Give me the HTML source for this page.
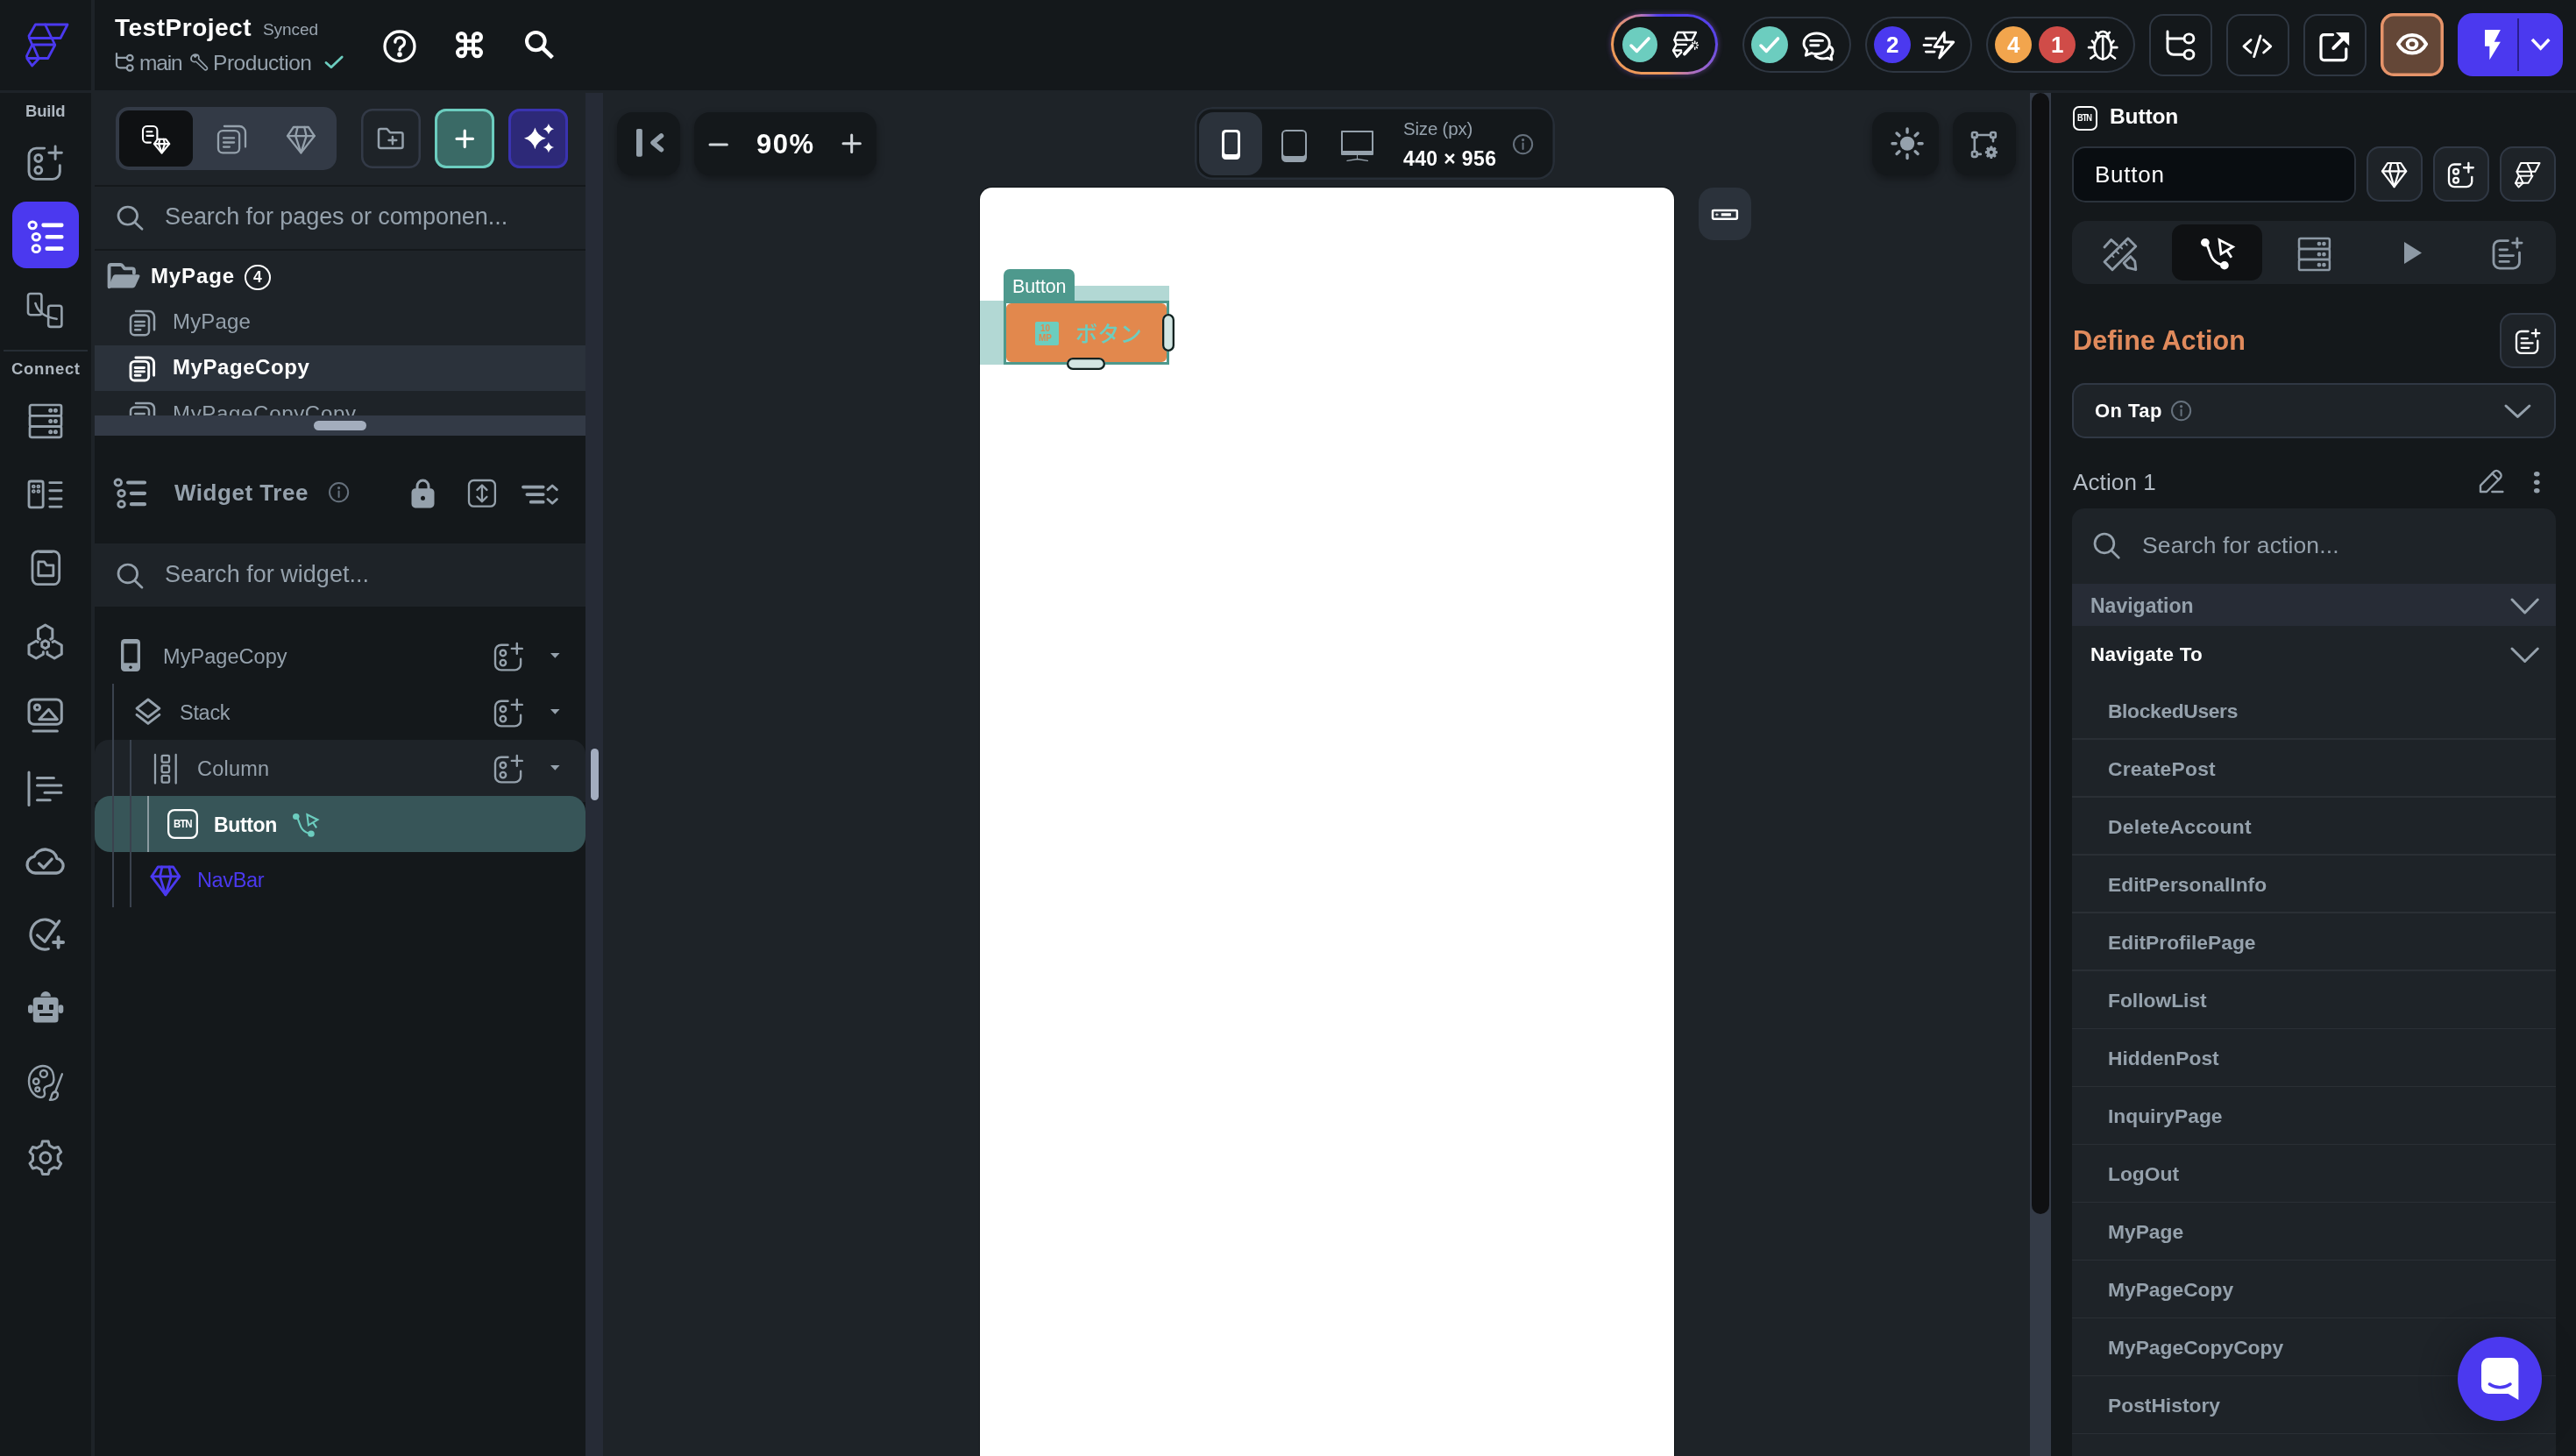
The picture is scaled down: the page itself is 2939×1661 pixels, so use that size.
<!DOCTYPE html>
<html lang="en"><head><meta charset="utf-8"><title>FlutterFlow - TestProject</title>
<style>
html,body{margin:0;padding:0;background:#1e2328;}
body{width:2939px;height:1661px;position:relative;overflow:hidden;font-family:"Liberation Sans","Noto Sans CJK JP",sans-serif;}
.b,.t,.i{position:absolute;}
.t{white-space:nowrap;line-height:1;will-change:transform;}
.i{overflow:visible;}
.f *{vector-effect:non-scaling-stroke;}
</style></head>
<body>
<div class="b" style="left:0.0px;top:0.0px;width:2939.0px;height:1661.0px;background:#1e2328;"></div>
<div class="b" style="left:0.0px;top:0.0px;width:2939.0px;height:102.5px;background:#14181b;"></div>
<div class="b" style="left:0.0px;top:106.0px;width:104.0px;height:1555.0px;background:#14181b;"></div>
<div class="b" style="left:104.0px;top:0.0px;width:4.0px;height:103.0px;background:#1e2328;"></div>
<div class="b" style="left:108.0px;top:106.0px;width:560.0px;height:391.0px;background:#1e2328;"></div>
<div class="b" style="left:108.0px;top:497.0px;width:560.0px;height:1164.0px;background:#14181b;"></div>
<div class="b" style="left:668.0px;top:106.0px;width:20.0px;height:1555.0px;background:#262b36;"></div>
<div class="b" style="left:2316.0px;top:106.0px;width:24.0px;height:1555.0px;background:#343b47;"></div>
<div class="b" style="left:2318.1px;top:106.0px;width:19.7px;height:1279.0px;background:#0f1012;border-radius:10px;"></div>
<div class="b" style="left:2340.0px;top:106.0px;width:599.0px;height:1555.0px;background:#14181b;"></div>
<svg class="i" style="left:26px;top:22px" width="56" height="58" viewBox="26 22 56 58" fill="none" stroke="#4b39ef" stroke-width="2.8" stroke-linejoin="round" stroke-linecap="round"><path d="M40.400 28H77L69 43.500H33.500L33 41z"/><path d="M51.500 28l7.500 15.500"/><path d="M33.500 43.500l3.200 7.500h26l-3.700-7.500"/><path d="M62.700 51.500L54.700 66.500H31l-.6-2.500 6.300-13"/><path d="M37.900 52l6.200 14.500"/><path d="M31 67l5.600 8 7.500-8"/></svg>
<div class="t " style="left:131.0px;top:17.9px;font-size:28px;color:#ffffff;font-weight:700;letter-spacing:0.51px;">TestProject</div>
<div class="t " style="left:300.0px;top:23.9px;font-size:19px;color:#9aa5b0;letter-spacing:-0.07px;">Synced</div>
<svg class="i f" style="left:132.8px;top:61.3px;color:#95a1ac;" width="18.6" height="19.6" viewBox="3.5 2 17.7 19.7" preserveAspectRatio="none" fill="none" stroke="currentColor" stroke-width="2.2" stroke-linecap="round" stroke-linejoin="round"><path d="M3.500 2v12.500a4 4 0 0 0 4 4h7"/><path d="M3.500 7h11"/><circle cx="18" cy="7" r="3.200"/><circle cx="18" cy="18.500" r="3.200"/></svg>
<div class="t " style="left:158.5px;top:59.6px;font-size:24.5px;color:#95a1ac;letter-spacing:-1.20px;">main</div>
<svg class="i f" style="left:218.4px;top:61.9px;color:#95a1ac;" width="18.5" height="17.8" viewBox="1.93544 2.57277 20.1859 19.8485" preserveAspectRatio="none" fill="none" stroke="currentColor" stroke-width="2" stroke-linecap="round" stroke-linejoin="round"><path d="M9 2.800a5.500 5.500 0 0 0-6.500 7.700c1.200 1.500 3.500 2 5.500 1.300l10.500 10a2 2 0 0 0 3-3L11.300 8.300c.7-2 .2-4-1.300-5.200L7 6 5.500 4.500z" stroke-width="1.63"/></svg>
<div class="t " style="left:243.0px;top:59.6px;font-size:24.5px;color:#95a1ac;letter-spacing:-0.46px;">Production</div>
<svg class="i f" style="left:372.4px;top:65.4px;color:#6ccdbf;" width="18.2" height="11.7" viewBox="4 6 17 12.5" preserveAspectRatio="none" fill="none" stroke="currentColor" stroke-width="2.8" stroke-linecap="round" stroke-linejoin="round"><path d="M4 13 L9.5 18.5 L21 6"/></svg>
<svg class="i f" style="left:438.6px;top:35.5px;color:#ffffff;" width="34.0" height="33.9" viewBox="1.5 1.5 21 21" preserveAspectRatio="none" fill="none" stroke="currentColor" stroke-width="3.3" stroke-linecap="round" stroke-linejoin="round"><circle cx="12" cy="12" r="10.500"/><path d="M8.800 9a3.300 3.300 0 1 1 4.800 3c-1 .6-1.600 1.200-1.600 2.500"/><circle cx="12" cy="17.700" r=".7" fill="currentColor"/></svg>
<svg class="i f" style="left:522.2px;top:38.2px;color:#ffffff;" width="27.0" height="26.3" viewBox="3 3 18 18" preserveAspectRatio="none" fill="none" stroke="currentColor" stroke-width="4" stroke-linecap="round" stroke-linejoin="round"><path d="M15 6v12a3 3 0 1 0 3-3H6a3 3 0 1 0 3 3V6a3 3 0 1 0-3 3h12a3 3 0 1 0-3-3"/></svg>
<svg class="i f" style="left:601.0px;top:37.0px;color:#ffffff;" width="29.3" height="28.6" viewBox="1.9 1.8 26.7 26.6" preserveAspectRatio="none" fill="none" stroke="currentColor" stroke-width="0" stroke-linecap="round" stroke-linejoin="round"><circle cx="11.300" cy="11.200" r="9.400" stroke-width="4.02"/><path d="M18.300 18.300L28.600 28.400" stroke-width="4.67" stroke-linecap="butt"/></svg>
<div class="b" style="left:1837.500px;top:16px;width:122.500px;height:69px;border-radius:35px;background:conic-gradient(from 0deg,#4b39ef 0deg,#5a45e8 85deg,#a86cc8 130deg,#ee9a5a 175deg,#ee9a5a 285deg,#c07ab0 318deg,#5a45e8 345deg,#4b39ef 360deg);box-shadow:0 0 6px rgba(150,100,220,.45)"></div>
<div class="b" style="left:1840.5px;top:19.0px;width:116.5px;height:63.0px;background:#14181b;border-radius:32px;"></div>
<div class="b" style="left:1850.5px;top:30.8px;width:40.5px;height:40.5px;background:#6ccdbf;border-radius:21px;"></div>
<svg class="i f" style="left:1861.2px;top:44.2px;color:#ffffff;" width="20.0" height="14.4" viewBox="4 6 17 12.5" preserveAspectRatio="none" fill="none" stroke="currentColor" stroke-width="3.6" stroke-linecap="round" stroke-linejoin="round"><path d="M4 13 L9.5 18.5 L21 6"/></svg>
<svg class="i f" style="left:1908.9px;top:36.5px;color:#ffffff;" width="28.4" height="27.8" viewBox="0.5 2.5 23 21" preserveAspectRatio="none" fill="none" stroke="currentColor" stroke-width="2.4" stroke-linecap="round" stroke-linejoin="round"><path d="M4.500 2.500h17l-3.500 6.500H1.500z"/><path d="M10 2.500l3.500 6.500"/><path d="M2 9.500l1.500 3.500h9"/><path d="M3.500 13l-3 5 3.500 5.500 4-4"/><path d="M0.800 18h7"/><path d="M11 21l7-7" stroke-width="3.84"/><path d="M20.500 10v2M20.500 15.500v1.500M17 13.500h1.500M22.500 13.500h1M18.300 11.300l.8.800M22.700 11.300l-.8.800M22.700 15.800l-.8-.8" stroke-width="1.54"/></svg>
<div class="b" style="left:1988.0px;top:19.3px;width:123.5px;height:63.4px;border-radius:32px;box-shadow:inset 0 0 0 2px #2f3742;box-sizing:border-box;"></div>
<div class="b" style="left:1998.0px;top:30.0px;width:42.0px;height:42.0px;background:#6ccdbf;border-radius:21px;"></div>
<svg class="i f" style="left:2009.4px;top:44.2px;color:#ffffff;" width="19.5" height="14.4" viewBox="4 6 17 12.5" preserveAspectRatio="none" fill="none" stroke="currentColor" stroke-width="3.6" stroke-linecap="round" stroke-linejoin="round"><path d="M4 13 L9.5 18.5 L21 6"/></svg>
<svg class="i f" style="left:2058.4px;top:37.5px;color:#ffffff;" width="33.1" height="30.1" viewBox="1.5 2.5 21.5 19.7" preserveAspectRatio="none" fill="none" stroke="currentColor" stroke-width="2.9" stroke-linecap="round" stroke-linejoin="round"><path d="M11 2.500c5.500 0 9.500 3.300 9.500 7.700s-4 7.700-9.500 7.700c-1.300 0-2.600-.2-3.800-.6L3 19l1-3.800C2.700 13.800 1.500 12 1.500 10.200 1.500 5.800 5.500 2.500 11 2.500z"/><path d="M6.500 8h9M6.500 11.500h6"/><path d="M21 12.500c1.500 1 2 2.300 2 3.500 0 1.200-.5 2.300-1.300 3.200l.5 3-3-1.300c-1 .3-2 .5-3.200.5-2.500 0-4.500-.8-6-2"/></svg>
<div class="b" style="left:2128.0px;top:19.3px;width:122.0px;height:63.4px;border-radius:32px;box-shadow:inset 0 0 0 2px #2f3742;box-sizing:border-box;"></div>
<div class="b" style="left:2138.0px;top:30.0px;width:42.0px;height:42.0px;background:#4b39ef;border-radius:21px;"></div>
<div class="t " style="left:2151.7px;top:38.2px;font-size:26px;color:#ffffff;font-weight:700;">2</div>
<svg class="i f" style="left:2195.2px;top:36.8px;color:#ffffff;" width="33.8" height="29.0" viewBox="1 1.5 21 21" preserveAspectRatio="none" fill="none" stroke="currentColor" stroke-width="2.9" stroke-linecap="round" stroke-linejoin="round"><path d="M15.500 1.500l-7 12h6l-2.500 9 10-13h-6.500z"/><path d="M2.500 6.500h7M1 12h5M2.500 17.500h6"/></svg>
<div class="b" style="left:2266.0px;top:19.3px;width:169.5px;height:63.4px;border-radius:32px;box-shadow:inset 0 0 0 2px #2f3742;box-sizing:border-box;"></div>
<div class="b" style="left:2276.0px;top:30.0px;width:42.0px;height:42.0px;background:#f2a54d;border-radius:21px;"></div>
<div class="t " style="left:2289.7px;top:38.2px;font-size:26px;color:#ffffff;font-weight:700;">4</div>
<div class="b" style="left:2326.0px;top:30.0px;width:42.0px;height:42.0px;background:#d04c48;border-radius:21px;"></div>
<div class="t " style="left:2339.5px;top:38.2px;font-size:26px;color:#ffffff;font-weight:700;">1</div>
<svg class="i f" style="left:2382.8px;top:36.3px;color:#ffffff;" width="32.4" height="31.4" viewBox="1.5 3 21 19" preserveAspectRatio="none" fill="none" stroke="currentColor" stroke-width="2.6" stroke-linecap="round" stroke-linejoin="round"><path d="M8 7a4 4 0 0 1 8 0"/><ellipse cx="12" cy="14" rx="6.300" ry="8"/><path d="M12 7v15"/><path d="M1.500 14h4M18.500 14h4M3 21.500l3.500-2.500M21 21.500l-3.500-2.500M7 3.500l2 2M17 3.500l-2 2M5.800 11.500L4 9.500M18.200 11.500l1.800-2"/></svg>
<div class="b" style="left:2452.4px;top:15.5px;width:71.4px;height:71.0px;border-radius:16px;box-shadow:inset 0 0 0 2px #2f3742;box-sizing:border-box;"></div>
<svg class="i f" style="left:2473.1px;top:36.2px;color:#ffffff;" width="29.9" height="31.3" viewBox="3.5 2 17.7 19.7" preserveAspectRatio="none" fill="none" stroke="currentColor" stroke-width="2.9" stroke-linecap="round" stroke-linejoin="round"><path d="M3.500 2v12.500a4 4 0 0 0 4 4h7"/><path d="M3.500 7h11"/><circle cx="18" cy="7" r="3.200"/><circle cx="18" cy="18.500" r="3.200"/></svg>
<div class="b" style="left:2540.0px;top:15.5px;width:71.5px;height:71.0px;border-radius:16px;box-shadow:inset 0 0 0 2px #2f3742;box-sizing:border-box;"></div>
<svg class="i f" style="left:2560.2px;top:40.5px;color:#ffffff;" width="30.7" height="23.6" viewBox="1.5 3 21 18" preserveAspectRatio="none" fill="none" stroke="currentColor" stroke-width="2.9" stroke-linecap="round" stroke-linejoin="round"><path d="M7 6.500L1.500 12 7 17.500M17 6.500l5.500 5.500-5.500 5.500M14.500 3l-5 18"/></svg>
<div class="b" style="left:2628.0px;top:15.5px;width:71.6px;height:71.0px;border-radius:16px;box-shadow:inset 0 0 0 2px #2f3742;box-sizing:border-box;"></div>
<svg class="i f" style="left:2647.6px;top:36.6px;color:#ffffff;" width="32.2" height="31.6" viewBox="3 2 19 18.5" preserveAspectRatio="none" fill="none" stroke="currentColor" stroke-width="3.2" stroke-linecap="round" stroke-linejoin="round"><path d="M11 3.500H5a2 2 0 0 0-2 2v13a2 2 0 0 0 2 2h13a2 2 0 0 0 2-2V13"/><path d="M11.500 12.500l8-8" stroke-width="4.08"/><path d="M13 2h9v9z" fill="currentColor" stroke="none"/></svg>
<div class="b" style="left:2715.8px;top:14.7px;width:72.3px;height:72.4px;background:#644737;border-radius:15px;box-shadow:inset 0 0 0 3.5px #e6946a;"></div>
<svg class="i f" style="left:2735.9px;top:39.7px;color:#ffffff;" width="32.1" height="20.6" viewBox="1.5 4.5 21 15" preserveAspectRatio="none" fill="none" stroke="currentColor" stroke-width="4" stroke-linecap="round" stroke-linejoin="round"><path d="M1.500 12C4 7 7.500 4.500 12 4.500S20 7 22.500 12C20 17 16.500 19.500 12 19.500S4 17 1.500 12z"/><circle cx="12" cy="12" r="3.500"/></svg>
<div class="b" style="left:2803.9px;top:14.7px;width:120.4px;height:72.4px;background:#4b39ef;border-radius:17px;"></div>
<div class="b" style="left:2871.8px;top:21.0px;width:2.2px;height:59.9px;background:#2a1f8f;"></div>
<svg class="i f" style="left:2835.0px;top:33.9px;color:#ffffff;" width="17.9" height="34.2" viewBox="7 2 10 20" preserveAspectRatio="none" fill="none" stroke="currentColor" stroke-width="0" stroke-linecap="round" stroke-linejoin="round"><path d="M7 2v11h3v9l7-12h-4l4-8z" fill="currentColor" stroke="none"/></svg>
<svg class="i f" style="left:2889.3px;top:45.4px;color:#ffffff;" width="19.3" height="10.3" viewBox="5 8.5 14 7" preserveAspectRatio="none" fill="none" stroke="currentColor" stroke-width="3.5" stroke-linecap="round" stroke-linejoin="round"><path d="M5 8.500l7 7 7-7" stroke-linecap="butt" stroke-linejoin="miter"/></svg>
<div class="t " style="left:29.0px;top:118.3px;font-size:18.5px;color:#aeb7c0;font-weight:700;letter-spacing:-0.19px;">Build</div>
<svg class="i f" style="left:33.1px;top:167.4px;color:#95a1ac;" width="37.4" height="37.4" viewBox="3.5 2.5 18 18" preserveAspectRatio="none" fill="none" stroke="currentColor" stroke-width="2.9" stroke-linecap="round" stroke-linejoin="round"><path d="M12 3.5H7.5a4 4 0 0 0-4 4v9a4 4 0 0 0 4 4h9a4 4 0 0 0 4-4V13"/><circle cx="8.7" cy="9" r="1.9"/><circle cx="8.7" cy="15.6" r="1.9"/><path d="M18 2.5v7M14.5 6h7"/></svg>
<div class="b" style="left:14.0px;top:230.0px;width:76.0px;height:76.0px;background:#4b39ef;border-radius:16px;"></div>
<svg class="i f" style="left:33.2px;top:252.5px;color:#ffffff;" width="37.3" height="34.5" viewBox="2.5 3 18 18" preserveAspectRatio="none" fill="none" stroke="currentColor" stroke-width="3" stroke-linecap="round" stroke-linejoin="round"><circle cx="4.500" cy="5" r="2"/><circle cx="6.500" cy="12" r="2"/><circle cx="6.500" cy="19" r="2"/><path d="M10.500 5h10M12.500 12h8M12.500 19h8" stroke-width="4.59"/></svg>
<svg class="i f" style="left:32.3px;top:335.3px;color:#95a1ac;" width="38.4" height="37.9" viewBox="1.3 1.3 21.4 21.3" preserveAspectRatio="none" fill="none" stroke="currentColor" stroke-width="2.6" stroke-linecap="round" stroke-linejoin="round"><rect x="1.300" y="1.300" width="8.600" height="13.600" rx="1.500"/><rect x="14.200" y="9" width="8.500" height="13.600" rx="1.500"/><path d="M6 7.500C7.500 13 12 16.500 19.500 17.500"/></svg>
<div class="b" style="left:4.0px;top:398.6px;width:96.0px;height:2.0px;background:#262d34;"></div>
<div class="t " style="left:13.0px;top:411.9px;font-size:18.5px;color:#aeb7c0;font-weight:700;letter-spacing:0.67px;">Connect</div>
<svg class="i f" style="left:34.0px;top:461.6px;color:#95a1ac;" width="36.0" height="36.8" viewBox="2.5 2.5 19 18.9" preserveAspectRatio="none" fill="none" stroke="currentColor" stroke-width="2.7" stroke-linecap="round" stroke-linejoin="round"><rect x="2.5" y="2.5" width="19" height="6.3" rx="1"/><rect x="2.5" y="8.8" width="19" height="6.3" rx="1"/><rect x="2.5" y="15.1" width="19" height="6.3" rx="1"/><circle cx="15" cy="5.7" r=".6"/><circle cx="18" cy="5.7" r=".6"/><circle cx="15" cy="12" r=".6"/><circle cx="18" cy="12" r=".6"/><circle cx="15" cy="18.3" r=".6"/><circle cx="18" cy="18.3" r=".6"/></svg>
<svg class="i f" style="left:33.1px;top:548.7px;color:#95a1ac;" width="37.1" height="29.9" viewBox="2.5 3 19.5 17.5" preserveAspectRatio="none" fill="none" stroke="currentColor" stroke-width="2.8" stroke-linecap="round" stroke-linejoin="round"><rect x="2.5" y="3" width="8.5" height="17.5" rx="1.2"/><path d="M15 4h7M15 9.3h7M15 14.7h7M15 20h7"/><circle cx="5.3" cy="6.5" r=".5"/><circle cx="8.2" cy="6.5" r=".5"/><circle cx="5.3" cy="9.8" r=".5"/><circle cx="8.2" cy="9.8" r=".5"/></svg>
<svg class="i f" style="left:36.6px;top:628.9px;color:#95a1ac;" width="30.7" height="37.7" viewBox="3 2.5 18 19" preserveAspectRatio="none" fill="none" stroke="currentColor" stroke-width="2.8" stroke-linecap="round" stroke-linejoin="round"><rect x="3" y="2.5" width="18" height="19" rx="3.5"/><path d="M8 2.8h8"/><path d="M7 8.5h4l1.5 2H17v6H7z"/></svg>
<svg class="i f" style="left:33.2px;top:713.0px;color:#95a1ac;" width="37.3" height="38.0" viewBox="3.8 2.6 16.4 16.9" preserveAspectRatio="none" fill="none" stroke="currentColor" stroke-width="3" stroke-linecap="round" stroke-linejoin="round"><path d="M9.300 9.800L8.400 9.300V4.700L12 2.600l3.600 2.100v4.600l-.9.500"/><path d="M8.300 11.200l-.9-.5-3.600 2.100v4.600l3.600 2.100 3.600-2.100v-1.100"/><path d="M15.700 11.200l.9-.5 3.600 2.100v4.600l-3.600 2.100-3.600-2.100v-1.100"/><path d="M12 10.500l1.700 1v2l-1.700 1-1.700-1v-2z"/></svg>
<svg class="i f" style="left:33.2px;top:798.2px;color:#95a1ac;" width="37.3" height="35.9" viewBox="2.5 2.5 19 19" preserveAspectRatio="none" fill="none" stroke="currentColor" stroke-width="3" stroke-linecap="round" stroke-linejoin="round"><rect x="2.5" y="2.5" width="19" height="15" rx="3"/><circle cx="7.3" cy="7.3" r="1.6"/><path d="M8.5 14.5l5.5-6 5 6z"/><path d="M5 21.5h14"/></svg>
<svg class="i f" style="left:33.2px;top:881.0px;color:#95a1ac;" width="36.9" height="37.4" viewBox="2.5 2 17.5 20" preserveAspectRatio="none" fill="none" stroke="currentColor" stroke-width="3" stroke-linecap="round" stroke-linejoin="round"><path d="M2.5 2v20"/><path d="M7 5.5h9M7 10h13M11 14.5h9M7 19h7"/></svg>
<svg class="i f" style="left:31.3px;top:968.5px;color:#95a1ac;" width="41.1" height="27.0" viewBox="2.02126 5.94878 19.7007 13.5512" preserveAspectRatio="none" fill="none" stroke="currentColor" stroke-width="3.3" stroke-linecap="round" stroke-linejoin="round"><path d="M6.5 19.5a4.8 4.8 0 0 1-.6-9.5 6.5 6.5 0 0 1 12.4 1.2 4.2 4.2 0 0 1-.3 8.3z"/><path d="M8.5 14l2.5 2.5 4.5-5"/></svg>
<svg class="i f" style="left:35.4px;top:1049.3px;color:#95a1ac;" width="37.1" height="34.1" viewBox="0.89685 0.697562 22.8032 19.8" preserveAspectRatio="none" fill="none" stroke="currentColor" stroke-width="3.2" stroke-linecap="round" stroke-linejoin="round"><path d="M17.800 3.600A9.900 9.900 0 1 0 13.360 20.160"/><path d="M5.600 11.100l5.200 4.300L21 1.700"/><path d="M20.300 12.400v6.800M16.900 15.800h6.800" stroke-width="3.85"/></svg>
<svg class="i f" style="left:31.7px;top:1131.3px;color:#95a1ac;" width="40.3" height="35.5" viewBox="1.5 2 21 18.5" preserveAspectRatio="none" fill="none" stroke="currentColor" stroke-width="0" stroke-linecap="round" stroke-linejoin="round"><path d="M9 5a3 3 0 0 1 6 0" fill="currentColor"/><rect x="4.5" y="5.5" width="15" height="15" rx="2" fill="currentColor"/><rect x="1.5" y="10" width="3" height="5" rx="1.5" fill="currentColor"/><rect x="19.500" y="10" width="3" height="5" rx="1.5" fill="currentColor"/></svg>
<svg class="i f" style="left:32.9px;top:1216.2px;color:#95a1ac;" width="37.9" height="38.8" viewBox="2.6 2.80648 18.9 19.4935" preserveAspectRatio="none" fill="none" stroke="currentColor" stroke-width="2.4" stroke-linecap="round" stroke-linejoin="round"><path d="M13 3.2C8 1.5 2.6 5.5 2.6 11.5c0 5 3 9 6.5 9.3 2.5.2 2.8-1.8 2.3-3.3-.6-1.8.6-3 2.4-3.3 2.8-.4 3.3-3 2.8-5.8-.3-2.3-1.5-4.3-3.6-5.2z"/><circle cx="11" cy="7.3" r="2"/><circle cx="6.7" cy="11.7" r="1.6"/><circle cx="7.5" cy="16.3" r="1.2"/><path d="M21.500 7.5L17.5 18"/><path d="M17.8 17.5c1.2.5 1.5 1.5 1 2.8-.5 1.400-2.500 2-4.300 2 .8-.8.8-1.800 1.100-2.800.3-1 1.200-1.800 2.200-2z"/></svg>
<svg class="i f" style="left:34.1px;top:1301.5px;color:#95a1ac;" width="35.7" height="37.5" viewBox="2.03 1.57 19.94 20.86" preserveAspectRatio="none" fill="none" stroke="currentColor" stroke-width="3" stroke-linecap="round" stroke-linejoin="round"><circle cx="12" cy="12" r="3.3"/><path d="M9.47 4.20 L10.12 1.57 L13.88 1.57 L14.53 4.20 L17.49 5.91 L20.10 5.16 L21.97 8.41 L20.02 10.30 L20.02 13.70 L21.97 15.59 L20.10 18.84 L17.49 18.09 L14.53 19.80 L13.88 22.43 L10.12 22.43 L9.47 19.80 L6.51 18.09 L3.90 18.84 L2.03 15.59 L3.98 13.70 L3.98 10.30 L2.03 8.41 L3.90 5.16 L6.51 5.91Z"/></svg>
<div class="b" style="left:43.0px;top:1146.0px;width:5.5px;height:6.0px;background:#14181b;border-radius:1px;"></div>
<div class="b" style="left:55.5px;top:1146.0px;width:5.5px;height:6.0px;background:#14181b;border-radius:1px;"></div>
<div class="b" style="left:44.5px;top:1156.0px;width:15.0px;height:3.0px;background:#14181b;"></div>
<div class="b" style="left:132.0px;top:122.0px;width:251.7px;height:72.0px;background:#333a46;border-radius:15px;"></div>
<div class="b" style="left:136.0px;top:126.0px;width:84.0px;height:64.0px;background:#0f1113;border-radius:11px;"></div>
<svg class="i f" style="left:162.7px;top:143.9px;color:#ffffff;" width="30.2" height="30.5" viewBox="2 3 20.26 19.68" preserveAspectRatio="none" fill="none" stroke="currentColor" stroke-width="2.1" stroke-linecap="round" stroke-linejoin="round"><path d="M13 12.500V6a3 3 0 0 0-3-3H5a3 3 0 0 0-3 3v6a3 3 0 0 0 3 3h3"/><path d="M5 7h4M5 10h5"/><g transform="translate(9.500 10.500) scale(.58)"><path d="M6.500 3.500h11l4.500 6-10 11.500L2 9.500z"/><path d="M2 9.500h20"/><path d="M9.500 3.500L8 9.500l4 11.500 4-11.500-1.500-6"/></g></svg>
<svg class="i f" style="left:249.2px;top:144.0px;color:#95a1ac;" width="31.0" height="30.3" viewBox="3 3.5 18 18" preserveAspectRatio="none" fill="none" stroke="currentColor" stroke-width="2.3" stroke-linecap="round" stroke-linejoin="round"><rect x="3" y="6.500" width="14" height="15" rx="3"/><path d="M7 3.500h10a4 4 0 0 1 4 4v10"/><path d="M6.500 11.500h7M6.500 14.500h7M6.500 17.500h4"/></svg>
<svg class="i f" style="left:328.0px;top:144.8px;color:#95a1ac;" width="30.8" height="29.4" viewBox="2 3.5 20 17.5" preserveAspectRatio="none" fill="none" stroke="currentColor" stroke-width="2.3" stroke-linecap="round" stroke-linejoin="round"><path d="M6.500 3.500h11l4.500 6-10 11.500L2 9.500z"/><path d="M2 9.500h20"/><path d="M9.500 3.500L8 9.500l4 11.500 4-11.500-1.500-6"/></svg>
<div class="b" style="left:412.0px;top:124.0px;width:68.0px;height:68.0px;background:#1e2328;border-radius:13px;box-shadow:inset 0 0 0 2.5px #333a47;box-sizing:border-box;"></div>
<svg class="i f" style="left:432.1px;top:146.9px;color:#95a1ac;" width="27.5" height="22.0" viewBox="2.5 4 19 16" preserveAspectRatio="none" fill="none" stroke="currentColor" stroke-width="2.5" stroke-linecap="round" stroke-linejoin="round"><path d="M2.500 5.500a1.500 1.500 0 0 1 1.500-1.500h5l2.500 3H20a1.500 1.500 0 0 1 1.500 1.500v10a1.500 1.500 0 0 1-1.500 1.500H4a1.500 1.500 0 0 1-1.500-1.500z"/><path d="M13.500 10.500v6M10.500 13.500h6"/></svg>
<div class="b" style="left:495.7px;top:124.0px;width:68.3px;height:68.0px;background:#3a6a66;border-radius:13px;box-shadow:inset 0 0 0 3px #6ccdbf;box-sizing:border-box;"></div>
<svg class="i f" style="left:520.9px;top:148.6px;color:#ffffff;" width="18.5" height="18.6" viewBox="4 4 16 16" preserveAspectRatio="none" fill="none" stroke="currentColor" stroke-width="3.2" stroke-linecap="round" stroke-linejoin="round"><path d="M12 4v16M4 12h16"/></svg>
<div class="b" style="left:580.0px;top:124.0px;width:68.0px;height:68.0px;background:#2d2978;border-radius:13px;box-shadow:inset 0 0 0 3px #3a33b0;box-sizing:border-box;"></div>
<svg class="i f" style="left:597.8px;top:141.4px;color:#ffffff;" width="34.1" height="33.2" viewBox="-0.2 0 24.2 23.8" preserveAspectRatio="none" fill="none" stroke="currentColor" stroke-width="0" stroke-linecap="round" stroke-linejoin="round"><path d="M8.6 3.30Q10.54 10.16 17.40 12.1Q10.54 14.04 8.6 20.90Q6.66 14.04 -0.20 12.1Q6.66 10.16 8.6 3.30Z M19.6 0.00Q20.48 3.52 24.00 4.4Q20.48 5.28 19.6 8.80Q18.72 5.28 15.20 4.4Q18.72 3.52 19.6 0.00Z M19.6 15.00Q20.48 18.52 24.00 19.4Q20.48 20.28 19.6 23.80Q18.72 20.28 15.20 19.4Q18.72 18.52 19.6 15.00Z" fill="currentColor" stroke="none"/></svg>
<div class="b" style="left:108.0px;top:210.5px;width:560.0px;height:2.0px;background:#14181b;"></div>
<svg class="i f" style="left:134.7px;top:236.3px;color:#95a1ac;" width="27.0" height="25.3" viewBox="3.5 3.5 17.5 17.5" preserveAspectRatio="none" fill="none" stroke="currentColor" stroke-width="2.7" stroke-linecap="round" stroke-linejoin="round"><circle cx="10.5" cy="10.5" r="7"/><path d="M15.8 15.8 L21 21"/></svg>
<div class="t " style="left:188.0px;top:234.4px;font-size:27px;color:#95a1ac;letter-spacing:-0.07px;">Search for pages or componen...</div>
<div class="b" style="left:108.0px;top:284.0px;width:560.0px;height:2.0px;background:#14181b;"></div>
<svg class="i f" style="left:124.0px;top:302.0px;color:#95a1ac;" width="35.5" height="26.5" viewBox="0.804529 1.164 23.3194 17.0235" preserveAspectRatio="none" fill="none" stroke="currentColor" stroke-width="1" stroke-linecap="round" stroke-linejoin="round"><g transform="scale(.1455) translate(-20 -880)"><path d="M28 1000V898Q28 888 38 888H86Q92 888 96 893L107 907H146Q156 907 156 917V930" stroke-width="3.85"/><path d="M60 938H176Q190 938 184 951L162 997Q158 1005 148 1005H34Q22 1005 27 994L47 947Q51 938 60 938Z" fill="currentColor" stroke="none"/></g></svg>
<div class="t " style="left:172.0px;top:303.0px;font-size:24px;color:#ffffff;font-weight:700;letter-spacing:0.86px;">MyPage</div>
<div class="b" style="left:279.0px;top:301.7px;width:29.8px;height:29.8px;border-radius:15px;box-shadow:inset 0 0 0 2px #fff;box-sizing:border-box;"></div>
<div class="t " style="left:289.3px;top:308.0px;font-size:17.5px;color:#ffffff;font-weight:700;">4</div>
<svg class="i f" style="left:149.2px;top:355.2px;color:#95a1ac;" width="27.0" height="27.2" viewBox="3 3.5 18 18" preserveAspectRatio="none" fill="none" stroke="currentColor" stroke-width="2.5" stroke-linecap="round" stroke-linejoin="round"><rect x="3" y="6.500" width="14" height="15" rx="3"/><path d="M7 3.500h10a4 4 0 0 1 4 4v10"/><path d="M6.500 11.500h7M6.500 14.500h7M6.500 17.500h4"/></svg>
<div class="t " style="left:196.8px;top:355.2px;font-size:24px;color:#95a1ac;letter-spacing:0.15px;">MyPage</div>
<div class="b" style="left:108.0px;top:393.8px;width:560.0px;height:52.0px;background:#2b323b;"></div>
<svg class="i f" style="left:149.4px;top:407.9px;color:#ffffff;" width="26.6" height="26.0" viewBox="3 3.5 18 18" preserveAspectRatio="none" fill="none" stroke="currentColor" stroke-width="2.9" stroke-linecap="round" stroke-linejoin="round"><rect x="3" y="6.500" width="14" height="15" rx="3"/><path d="M7 3.500h10a4 4 0 0 1 4 4v10"/><path d="M6.500 11.500h7M6.500 14.500h7M6.500 17.500h4"/></svg>
<div class="t " style="left:196.8px;top:407.3px;font-size:24px;color:#ffffff;font-weight:700;letter-spacing:0.57px;">MyPageCopy</div>
<div class="b" style="left:108px;top:446px;width:560px;height:27.800px;overflow:hidden"><svg class="i f" style="left:41.2px;top:13.8px;color:#95a1ac;" width="27.0" height="27.0" viewBox="3 3.5 18 18" preserveAspectRatio="none" fill="none" stroke="currentColor" stroke-width="2.5" stroke-linecap="round" stroke-linejoin="round"><rect x="3" y="6.500" width="14" height="15" rx="3"/><path d="M7 3.500h10a4 4 0 0 1 4 4v10"/><path d="M6.500 11.500h7M6.500 14.500h7M6.500 17.500h4"/></svg>
<div class="t " style="left:88.8px;top:13.5px;font-size:24px;color:#95a1ac;letter-spacing:0.68px;">MyPageCopyCopy</div>
</div>
<div class="b" style="left:108.0px;top:473.8px;width:560.0px;height:23.6px;background:#333a46;"></div>
<div class="b" style="left:357.8px;top:480.3px;width:60.0px;height:10.3px;background:#a3adbd;border-radius:6px;"></div>
<svg class="i f" style="left:131.4px;top:547.4px;color:#95a1ac;" width="34.0" height="31.7" viewBox="2.5 3 18 18" preserveAspectRatio="none" fill="none" stroke="currentColor" stroke-width="2.8" stroke-linecap="round" stroke-linejoin="round"><circle cx="4.500" cy="5" r="2"/><circle cx="6.500" cy="12" r="2"/><circle cx="6.500" cy="19" r="2"/><path d="M10.500 5h10M12.500 12h8M12.500 19h8" stroke-width="4.20"/></svg>
<div class="t " style="left:199.0px;top:549.0px;font-size:26px;color:#95a1ac;font-weight:700;letter-spacing:0.53px;">Widget Tree</div>
<svg class="i f" style="left:376.0px;top:551.2px;color:#66717d;" width="21.2" height="21.2" viewBox="2 2 20 20" preserveAspectRatio="none" fill="none" stroke="currentColor" stroke-width="2" stroke-linecap="round" stroke-linejoin="round"><circle cx="12" cy="12" r="10"/><path d="M12 11v6"/><circle cx="12" cy="7.3" r="0.6" fill="currentColor"/></svg>
<svg class="i f" style="left:470.5px;top:548.3px;color:#95a1ac;" width="23.0" height="29.9" viewBox="4 2.5 16 19.5" preserveAspectRatio="none" fill="none" stroke="currentColor" stroke-width="3" stroke-linecap="round" stroke-linejoin="round"><path d="M7.500 10V7a4.500 4.500 0 0 1 9 0v3" /><rect x="4" y="9.500" width="16" height="12.500" rx="2" fill="currentColor"/><circle cx="12" cy="15.700" r="1.700" fill="#14181b" stroke="none"/></svg>
<svg class="i f" style="left:534.9px;top:548.1px;color:#95a1ac;" width="29.9" height="29.7" viewBox="2.5 2.5 19 19" preserveAspectRatio="none" fill="none" stroke="currentColor" stroke-width="2.3" stroke-linecap="round" stroke-linejoin="round"><rect x="2.500" y="2.500" width="19" height="19" rx="3.500"/><path d="M12 6.500v11M8.500 9.500l3.500-3.500 3.500 3.500M8.500 14.500l3.500 3.500 3.500-3.500"/></svg>
<svg class="i f" style="left:597.2px;top:554.4px;color:#95a1ac;" width="38.4" height="20.2" viewBox="1 5.5 22 13" preserveAspectRatio="none" fill="none" stroke="currentColor" stroke-width="2.8" stroke-linecap="round" stroke-linejoin="round"><path d="M1 6.500h13M3.500 12h10.500M6 17.500h8" stroke-width="3.79"/><path d="M17 8.500l3-3 3 3M17 15.500l3 3 3-3"/></svg>
<div class="b" style="left:108.0px;top:619.5px;width:560.0px;height:72.2px;background:#1e2328;"></div>
<svg class="i f" style="left:134.7px;top:643.9px;color:#95a1ac;" width="27.0" height="26.2" viewBox="3.5 3.5 17.5 17.5" preserveAspectRatio="none" fill="none" stroke="currentColor" stroke-width="2.7" stroke-linecap="round" stroke-linejoin="round"><circle cx="10.5" cy="10.5" r="7"/><path d="M15.8 15.8 L21 21"/></svg>
<div class="t " style="left:188.0px;top:642.1px;font-size:27px;color:#95a1ac;letter-spacing:0.02px;">Search for widget...</div>
<div class="b" style="left:108.0px;top:843.5px;width:560.0px;height:71.5px;background:#1e2328;border-radius:16px 16px 0 0;"></div>
<div class="b" style="left:108.0px;top:907.7px;width:560.0px;height:64.1px;background:#375558;border-radius:18px;"></div>
<div class="b" style="left:128.3px;top:780.0px;width:1.7px;height:255.0px;background:#3a424e;"></div>
<div class="b" style="left:148.3px;top:843.5px;width:1.7px;height:191.5px;background:#3a424e;"></div>
<div class="b" style="left:168.2px;top:907.7px;width:1.8px;height:64.1px;background:#8a9aa0;"></div>
<svg class="i f" style="left:138.0px;top:729.4px;color:#95a1ac;" width="22.0" height="37.0" viewBox="5.5 1.5 13 21" preserveAspectRatio="none" fill="none" stroke="currentColor" stroke-width="0" stroke-linecap="round" stroke-linejoin="round"><rect x="5.500" y="1.500" width="13" height="21" rx="2.500" fill="currentColor"/><rect x="7.500" y="4.500" width="9" height="12.500" fill="#14181b" stroke="none"/><circle cx="12" cy="19.800" r="1" fill="#14181b" stroke="none"/></svg>
<div class="t " style="left:186.0px;top:738.1px;font-size:23.5px;color:#95a1ac;letter-spacing:0.05px;">MyPageCopy</div>
<svg class="i f" style="left:156.4px;top:798.2px;color:#95a1ac;" width="25.9" height="27.4" viewBox="2.5 2.5 19 19" preserveAspectRatio="none" fill="none" stroke="currentColor" stroke-width="2.9" stroke-linecap="round" stroke-linejoin="round"><path d="M12 2.500l9.500 7-9.500 7-9.500-7z"/><path d="M2.500 14.500l9.500 7 9.500-7"/></svg>
<div class="t " style="left:205.4px;top:801.6px;font-size:23.5px;color:#95a1ac;letter-spacing:-0.29px;">Stack</div>
<svg class="i f" style="left:177.2px;top:861.1px;color:#95a1ac;" width="23.7" height="32.5" viewBox="3.5 2 17 20" preserveAspectRatio="none" fill="none" stroke="currentColor" stroke-width="2.3" stroke-linecap="round" stroke-linejoin="round"><path d="M3.500 2v20M20.500 2v20"/><rect x="9" y="2.500" width="6" height="4.800" rx="1"/><rect x="9" y="9.600" width="6" height="4.800" rx="1"/><rect x="9" y="16.700" width="6" height="4.800" rx="1"/></svg>
<div class="t " style="left:224.5px;top:865.6px;font-size:23.5px;color:#95a1ac;letter-spacing:0.24px;">Column</div>
<div class="b" style="left:191.0px;top:922.7px;width:34.6px;height:34.1px;border-radius:8px;box-shadow:inset 0 0 0 2.3px #fff;box-sizing:border-box;"></div>
<div class="t " style="left:197.7px;top:934.6px;font-size:11.5px;color:#ffffff;font-weight:700;letter-spacing:-1.07px;transform:scaleY(1.15);transform-origin:0 80%;">BTN</div>
<div class="t " style="left:243.8px;top:929.7px;font-size:23px;color:#ffffff;font-weight:700;letter-spacing:-0.38px;">Button</div>
<svg class="i f" style="left:334.1px;top:927.5px;color:#6ccdbf;" width="28.4" height="26.7" viewBox="0 0.7 22.5 22.6" preserveAspectRatio="none" fill="none" stroke="currentColor" stroke-width="2.1" stroke-linecap="round" stroke-linejoin="round"><circle cx="3" cy="3.700" r="3" fill="currentColor" stroke="none"/><circle cx="16.600" cy="20.300" r="3" fill="currentColor" stroke="none"/><path d="M3 3.700C7.500 8 4.500 18 16.600 20.300"/><path d="M13 1.800L22.500 6.800L14.200 12Z" stroke-linejoin="miter"/><path d="M18.300 9.500L21.500 14.600" stroke-linecap="butt"/></svg>
<svg class="i f" style="left:173.1px;top:989.4px;color:#4b39ef;" width="31.8" height="31.8" viewBox="2 3.5 20 17.5" preserveAspectRatio="none" fill="none" stroke="currentColor" stroke-width="2.8" stroke-linecap="round" stroke-linejoin="round"><path d="M6.500 3.500h11l4.500 6-10 11.500L2 9.500z"/><path d="M2 9.500h20"/><path d="M9.500 3.500L8 9.500l4 11.500 4-11.500-1.500-6"/></svg>
<div class="t " style="left:224.5px;top:993.4px;font-size:23.5px;color:#4b39ef;letter-spacing:-0.37px;">NavBar</div>
<svg class="i f" style="left:564.7px;top:734.2px;color:#95a1ac;" width="30.8" height="30.4" viewBox="3.5 2.5 18 18" preserveAspectRatio="none" fill="none" stroke="currentColor" stroke-width="2.4" stroke-linecap="round" stroke-linejoin="round"><path d="M12 3.5H7.5a4 4 0 0 0-4 4v9a4 4 0 0 0 4 4h9a4 4 0 0 0 4-4V13"/><circle cx="8.7" cy="9" r="1.9"/><circle cx="8.7" cy="15.6" r="1.9"/><path d="M18 2.5v7M14.5 6h7"/></svg>
<svg class="i f" style="left:628.4px;top:745.3px;color:#95a1ac;" width="10.6" height="5.7" viewBox="5 9 14 7" preserveAspectRatio="none" fill="none" stroke="currentColor" stroke-width="0" stroke-linecap="round" stroke-linejoin="round"><path d="M5 9 L19 9 L12 16 Z" fill="currentColor" stroke="none"/></svg>
<svg class="i f" style="left:564.7px;top:798.2px;color:#95a1ac;" width="30.8" height="30.4" viewBox="3.5 2.5 18 18" preserveAspectRatio="none" fill="none" stroke="currentColor" stroke-width="2.4" stroke-linecap="round" stroke-linejoin="round"><path d="M12 3.5H7.5a4 4 0 0 0-4 4v9a4 4 0 0 0 4 4h9a4 4 0 0 0 4-4V13"/><circle cx="8.7" cy="9" r="1.9"/><circle cx="8.7" cy="15.6" r="1.9"/><path d="M18 2.5v7M14.5 6h7"/></svg>
<svg class="i f" style="left:628.4px;top:809.3px;color:#95a1ac;" width="10.6" height="5.7" viewBox="5 9 14 7" preserveAspectRatio="none" fill="none" stroke="currentColor" stroke-width="0" stroke-linecap="round" stroke-linejoin="round"><path d="M5 9 L19 9 L12 16 Z" fill="currentColor" stroke="none"/></svg>
<svg class="i f" style="left:564.7px;top:862.2px;color:#95a1ac;" width="30.8" height="30.4" viewBox="3.5 2.5 18 18" preserveAspectRatio="none" fill="none" stroke="currentColor" stroke-width="2.4" stroke-linecap="round" stroke-linejoin="round"><path d="M12 3.5H7.5a4 4 0 0 0-4 4v9a4 4 0 0 0 4 4h9a4 4 0 0 0 4-4V13"/><circle cx="8.7" cy="9" r="1.9"/><circle cx="8.7" cy="15.6" r="1.9"/><path d="M18 2.5v7M14.5 6h7"/></svg>
<svg class="i f" style="left:628.4px;top:873.3px;color:#95a1ac;" width="10.6" height="5.7" viewBox="5 9 14 7" preserveAspectRatio="none" fill="none" stroke="currentColor" stroke-width="0" stroke-linecap="round" stroke-linejoin="round"><path d="M5 9 L19 9 L12 16 Z" fill="currentColor" stroke="none"/></svg>
<div class="b" style="left:673.7px;top:853.8px;width:9.3px;height:59.7px;background:#a3adbf;border-radius:5px;"></div>
<div class="b" style="left:704.0px;top:127.6px;width:72.0px;height:72.1px;background:#14181b;border-radius:18px;box-shadow:0 4px 10px rgba(0,0,0,.35);"></div>
<svg class="i f" style="left:725.8px;top:147.0px;color:#95a1ac;" width="28.5" height="31.7" viewBox="3 3 15 18" preserveAspectRatio="none" fill="none" stroke="currentColor" stroke-width="0" stroke-linecap="round" stroke-linejoin="round"><rect x="3" y="3" width="3.600" height="18" rx="1" fill="currentColor" stroke="none"/><path d="M18 7.500l-5 4.500 5 4.500" stroke-width="5.49"/></svg>
<div class="b" style="left:792.0px;top:127.6px;width:208.0px;height:72.1px;background:#14181b;border-radius:18px;box-shadow:0 4px 10px rgba(0,0,0,.35);"></div>
<svg class="i f" style="left:810.1px;top:164.5px;color:#d0d5da;" width="19.4" height="0.5" viewBox="4 12 16 0.01" preserveAspectRatio="none" fill="none" stroke="currentColor" stroke-width="3" stroke-linecap="round" stroke-linejoin="round"><path d="M4 12h16"/></svg>
<div class="t " style="left:863.4px;top:149.0px;font-size:31px;color:#ffffff;font-weight:700;letter-spacing:1.48px;">90%</div>
<svg class="i f" style="left:962.1px;top:154.2px;color:#d0d5da;" width="19.4" height="19.5" viewBox="4 4 16 16" preserveAspectRatio="none" fill="none" stroke="currentColor" stroke-width="3" stroke-linecap="round" stroke-linejoin="round"><path d="M12 4v16M4 12h16"/></svg>
<div class="b" style="left:1362.5px;top:121.8px;width:411.5px;height:83.2px;background:#14181b;border-radius:20px;box-shadow:inset 0 0 0 2.5px #272e37;box-sizing:border-box;"></div>
<div class="b" style="left:1368.4px;top:128.0px;width:72.1px;height:71.7px;background:#2b323b;border-radius:17px;"></div>
<div class="b" style="left:1394.0px;top:148.4px;width:21.0px;height:33.6px;background:#fff;border-radius:4.5px;"></div>
<div class="b" style="left:1396.7px;top:151.1px;width:15.6px;height:25.4px;background:#2b323b;border-radius:2px;"></div>
<div class="b" style="left:1461.9px;top:147.9px;width:29.1px;height:36.7px;background:#95a1ac;border-radius:5.5px;"></div>
<div class="b" style="left:1464.3px;top:150.3px;width:24.3px;height:27.8px;background:#14181b;border-radius:3px;"></div>
<div class="b" style="left:1530.2px;top:149.0px;width:37.0px;height:28.0px;background:#95a1ac;border-radius:1px;"></div>
<div class="b" style="left:1531.9px;top:150.7px;width:33.6px;height:21.5px;background:#14181b;"></div>
<div class="b" style="left:1547.9px;top:177.0px;width:1.6px;height:4.0px;background:#95a1ac;"></div>
<svg class="i" style="left:1535px;top:179px" width="28" height="6" viewBox="0 0 28 6" fill="none" stroke="#95a1ac" stroke-width="1.300" stroke-linecap="round"><path d="M2 4.300L13.700 2.500L25.400 4.300"/></svg>
<div class="t " style="left:1601.0px;top:137.0px;font-size:20.5px;color:#95a1ac;letter-spacing:-0.19px;">Size (px)</div>
<div class="t " style="left:1601.0px;top:170.1px;font-size:23px;color:#ffffff;font-weight:700;letter-spacing:0.38px;">440 × 956</div>
<svg class="i f" style="left:1727.0px;top:153.6px;color:#66717d;" width="21.2" height="21.2" viewBox="2 2 20 20" preserveAspectRatio="none" fill="none" stroke="currentColor" stroke-width="2" stroke-linecap="round" stroke-linejoin="round"><circle cx="12" cy="12" r="10"/><path d="M12 11v6"/><circle cx="12" cy="7.3" r="0.6" fill="currentColor"/></svg>
<div class="b" style="left:2135.5px;top:127.6px;width:76.5px;height:72.1px;background:#14181b;border-radius:18px;box-shadow:0 4px 10px rgba(0,0,0,.35);"></div>
<svg class="i f" style="left:2158.9px;top:147.4px;color:#95a1ac;" width="34.1" height="33.5" viewBox="1.5 1.5 21 21" preserveAspectRatio="none" fill="none" stroke="currentColor" stroke-width="3.4" stroke-linecap="round" stroke-linejoin="round"><circle cx="12" cy="12" r="5" fill="currentColor" stroke="none"/><path d="M12 1.500v2.500M12 20v2.500M1.500 12h2.500M20 12h2.500M4.600 4.600l1.800 1.800M17.600 17.600l1.800 1.800M4.600 19.400l1.800-1.800M17.600 6.400l1.800-1.800"/></svg>
<div class="b" style="left:2227.5px;top:127.6px;width:72.5px;height:72.1px;background:#14181b;border-radius:18px;box-shadow:0 4px 10px rgba(0,0,0,.35);"></div>
<svg class="i f" style="left:2249.9px;top:150.5px;color:#95a1ac;" width="28.3" height="29.4" viewBox="2.5 2.5 20.06 20.06" preserveAspectRatio="none" fill="none" stroke="currentColor" stroke-width="2.6" stroke-linecap="round" stroke-linejoin="round"><rect x="2.500" y="2.500" width="4" height="4" rx="1"/><rect x="17.500" y="2.500" width="4" height="4" rx="1"/><rect x="2.500" y="17.500" width="4" height="4" rx="1"/><path d="M6.500 4.500h11M4.500 6.500v11M6.500 19.500h3M19.500 6.500v3"/><path d="M17.21 14.69 L17.39 13.44 L18.61 13.44 L18.79 14.69 L19.78 15.10 L20.79 14.34 L21.66 15.21 L20.90 16.22 L21.31 17.21 L22.56 17.39 L22.56 18.61 L21.31 18.79 L20.90 19.78 L21.66 20.79 L20.79 21.66 L19.78 20.90 L18.79 21.31 L18.61 22.56 L17.39 22.56 L17.21 21.31 L16.22 20.90 L15.21 21.66 L14.34 20.79 L15.10 19.78 L14.69 18.79 L13.44 18.61 L13.44 17.39 L14.69 17.21 L15.10 16.22 L14.34 15.21 L15.21 14.34 L16.22 15.10Z" fill="currentColor" stroke-width="1.15"/><circle cx="18" cy="18" r="1.400" fill="#14181b" stroke="none"/></svg>
<div class="b" style="left:1118.0px;top:213.8px;width:792.0px;height:1447.2px;background:#fff;border-radius:14px 14px 0 0;box-shadow:0 0 0 1px #0c1014;"></div>
<div class="b" style="left:1938.0px;top:214.0px;width:59.8px;height:59.9px;background:#2b323b;border-radius:17px;"></div>
<svg class="i f" style="left:1954.1px;top:240.1px;color:#ffffff;" width="27.9" height="9.7" viewBox="2 7.5 20 9" preserveAspectRatio="none" fill="none" stroke="currentColor" stroke-width="2.4" stroke-linecap="round" stroke-linejoin="round"><rect x="2" y="7.500" width="20" height="9" rx="1" stroke-width="2.47"/><rect x="9" y="10.500" width="8" height="3" fill="currentColor" stroke="none"/><path d="M4.500 12h2M5.500 11v2" stroke-width="0.99"/></svg>
<div class="b" style="left:1118.0px;top:343.4px;width:27.3px;height:72.2px;background:#b2d8d4;"></div>
<div class="b" style="left:1225.5px;top:325.7px;width:108.1px;height:18.3px;background:#b2d8d4;"></div>
<div class="b" style="left:1145.2px;top:307.1px;width:80.8px;height:37.9px;background:#4e998d;border-radius:7px 7px 0 0;"></div>
<div class="t " style="left:1154.8px;top:316.8px;font-size:21.5px;color:#ffffff;letter-spacing:-0.13px;">Button</div>
<div class="b" style="left:1145.2px;top:343.4px;width:188.4px;height:72.2px;background:#4e998d;"></div>
<div class="b" style="left:1147.5px;top:346.0px;width:183.8px;height:67.1px;background:#fff;"></div>
<div class="b" style="left:1147.5px;top:346.0px;width:183.8px;height:67.1px;background:#e2884d;border-radius:5.6px;"></div>
<div class="b" style="left:1180.8px;top:366.5px;width:27.2px;height:27.1px;background:#6ccdbf;border-radius:2px;"></div>
<div class="t " style="left:1186.8px;top:370.3px;font-size:10px;color:#e2884d;font-weight:700;">10</div>
<div class="t " style="left:1184.6px;top:381.3px;font-size:10px;color:#e2884d;font-weight:700;">MP</div>
<div class="t" style="left:1226.800px;top:365.200px;font-size:25.200px;font-weight:500;color:#6ccdbf;line-height:32px;">ボタン</div>
<div class="b" style="left:1326.0px;top:357.8px;width:13.5px;height:43.2px;background:#d3e6e3;border-radius:7px;box-shadow:inset 0 0 0 2.3px #10211f;box-sizing:border-box;"></div>
<div class="b" style="left:1217.0px;top:407.7px;width:44.0px;height:14.0px;background:#d3e6e3;border-radius:7px;box-shadow:inset 0 0 0 2.3px #10211f;box-sizing:border-box;"></div>
<div class="b" style="left:2365.0px;top:121.4px;width:28.0px;height:27.6px;border-radius:7px;box-shadow:inset 0 0 0 2px #fff;box-sizing:border-box;"></div>
<div class="t " style="left:2370.4px;top:130.8px;font-size:9.3px;color:#ffffff;font-weight:700;letter-spacing:-1.05px;transform:scaleY(1.15);transform-origin:0 80%;">BTN</div>
<div class="t " style="left:2406.7px;top:121.3px;font-size:24.5px;color:#ffffff;font-weight:700;letter-spacing:-0.12px;">Button</div>
<div class="b" style="left:2364.0px;top:166.5px;width:323.7px;height:64.9px;background:#090d11;border-radius:15px;box-shadow:inset 0 0 0 2px #2b323b;box-sizing:border-box;"></div>
<div class="t " style="left:2389.5px;top:186.0px;font-size:26px;color:#ffffff;letter-spacing:0.77px;">Button</div>
<div class="b" style="left:2700.0px;top:166.5px;width:63.8px;height:63.0px;background:#1e2328;border-radius:15px;box-shadow:inset 0 0 0 2px #303844;box-sizing:border-box;"></div>
<svg class="i f" style="left:2718.0px;top:185.6px;color:#ffffff;" width="27.2" height="27.2" viewBox="2 3.5 20 17.5" preserveAspectRatio="none" fill="none" stroke="currentColor" stroke-width="2.2" stroke-linecap="round" stroke-linejoin="round"><path d="M6.500 3.500h11l4.500 6-10 11.500L2 9.500z"/><path d="M2 9.500h20"/><path d="M9.500 3.500L8 9.500l4 11.500 4-11.500-1.500-6"/></svg>
<div class="b" style="left:2776.0px;top:166.5px;width:63.8px;height:63.0px;background:#1e2328;border-radius:15px;box-shadow:inset 0 0 0 2px #303844;box-sizing:border-box;"></div>
<svg class="i f" style="left:2794.1px;top:185.7px;color:#ffffff;" width="27.8" height="27.1" viewBox="3.5 2.5 18 18" preserveAspectRatio="none" fill="none" stroke="currentColor" stroke-width="2.3" stroke-linecap="round" stroke-linejoin="round"><path d="M12 3.5H7.5a4 4 0 0 0-4 4v9a4 4 0 0 0 4 4h9a4 4 0 0 0 4-4V13"/><circle cx="8.7" cy="9" r="1.9"/><circle cx="8.7" cy="15.6" r="1.9"/><path d="M18 2.5v7M14.5 6h7"/></svg>
<div class="b" style="left:2852.0px;top:166.5px;width:63.8px;height:63.0px;background:#1e2328;border-radius:15px;box-shadow:inset 0 0 0 2px #303844;box-sizing:border-box;"></div>
<svg class="i f" style="left:2869.9px;top:185.5px;color:#ffffff;" width="27.5" height="27.4" viewBox="1.3 2.5 21.2 21" preserveAspectRatio="none" fill="none" stroke="currentColor" stroke-width="2" stroke-linecap="round" stroke-linejoin="round"><path d="M6 2.500h16.500l-4 7.500H2.500z"/><path d="M11.500 2.500l3.500 7.500"/><path d="M2.500 10l1.800 3.800 11-.1L15 10"/><path d="M4.300 13.800l-3 6.200h11.200l3.800-6.300"/><path d="M5 13.800l3 6.200"/><path d="M1.300 20l2.700 3.500 4-3.500"/></svg>
<div class="b" style="left:2364.0px;top:252.3px;width:552.0px;height:71.3px;background:#1e2328;border-radius:17px;"></div>
<div class="b" style="left:2478.0px;top:256.0px;width:103.0px;height:64.0px;background:#0f1113;border-radius:13px;"></div>
<svg class="i f" style="left:2401.1px;top:271.9px;color:#8d99a5;" width="35.8" height="35.7" viewBox="1 0.8 22.3 22.3" preserveAspectRatio="none" fill="none" stroke="currentColor" stroke-width="2.9" stroke-linecap="round" stroke-linejoin="round"><path d="M17.700 0.800L23.300 6.400L6.600 23.100L1 17.500z"/><path d="M15 3.500l2 2M12 6.500l1.500 1.500M9 9.500l2 2M6 12.500l1.500 1.500" stroke-width="2.08"/><path d="M1 7L5.800 1.800L10 5.500M14.800 18.300L19.600 13.700L22.600 17L23.300 23.100L17.500 21.600z"/></svg>
<svg class="i f" style="left:2511.3px;top:272.2px;color:#ffffff;" width="36.5" height="35.5" viewBox="0 0.7 22.5 22.6" preserveAspectRatio="none" fill="none" stroke="currentColor" stroke-width="2.8" stroke-linecap="round" stroke-linejoin="round"><circle cx="3" cy="3.700" r="3" fill="currentColor" stroke="none"/><circle cx="16.600" cy="20.300" r="3" fill="currentColor" stroke="none"/><path d="M3 3.700C7.500 8 4.500 18 16.600 20.300"/><path d="M13 1.800L22.500 6.800L14.200 12Z" stroke-linejoin="miter"/><path d="M18.300 9.500L21.500 14.600" stroke-linecap="butt"/></svg>
<svg class="i f" style="left:2622.8px;top:271.8px;color:#8d99a5;" width="34.9" height="36.1" viewBox="2.5 2.5 19 18.9" preserveAspectRatio="none" fill="none" stroke="currentColor" stroke-width="2.5" stroke-linecap="round" stroke-linejoin="round"><rect x="2.5" y="2.5" width="19" height="6.3" rx="1"/><rect x="2.5" y="8.8" width="19" height="6.3" rx="1"/><rect x="2.5" y="15.1" width="19" height="6.3" rx="1"/><circle cx="15" cy="5.7" r=".6"/><circle cx="18" cy="5.7" r=".6"/><circle cx="15" cy="12" r=".6"/><circle cx="18" cy="12" r=".6"/><circle cx="15" cy="18.3" r=".6"/><circle cx="18" cy="18.3" r=".6"/></svg>
<svg class="i f" style="left:2742.5px;top:275.5px;color:#8d99a5;" width="20.0" height="24.9" viewBox="6 3.5 14 17" preserveAspectRatio="none" fill="none" stroke="currentColor" stroke-width="0" stroke-linecap="round" stroke-linejoin="round"><path d="M6 3.500l14 8.500-14 8.500z" fill="currentColor" stroke="none"/></svg>
<svg class="i f" style="left:2844.9px;top:272.4px;color:#8d99a5;" width="32.1" height="34.1" viewBox="3.5 1.5 18.5 20" preserveAspectRatio="none" fill="none" stroke="currentColor" stroke-width="2.8" stroke-linecap="round" stroke-linejoin="round"><path d="M13 3H7.500a4 4 0 0 0-4 4v10.500a4 4 0 0 0 4 4h9a4 4 0 0 0 4-4V11"/><path d="M7.500 9h5M7.500 13h9M7.500 17h6"/><path d="M19 1.500v6M16 4.500h6"/></svg>
<div class="t " style="left:2365.0px;top:373.2px;font-size:30.5px;color:#e08a5c;font-weight:700;letter-spacing:0.13px;">Define Action</div>
<div class="b" style="left:2852.0px;top:356.7px;width:64.0px;height:63.3px;background:#1e2328;border-radius:15px;box-shadow:inset 0 0 0 2px #303844;box-sizing:border-box;"></div>
<svg class="i f" style="left:2870.8px;top:375.5px;color:#ffffff;" width="26.4" height="26.9" viewBox="3.5 1.5 18.5 20" preserveAspectRatio="none" fill="none" stroke="currentColor" stroke-width="2.3" stroke-linecap="round" stroke-linejoin="round"><path d="M13 3H7.500a4 4 0 0 0-4 4v10.500a4 4 0 0 0 4 4h9a4 4 0 0 0 4-4V11"/><path d="M7.500 9h5M7.500 13h9M7.500 17h6"/><path d="M19 1.500v6M16 4.500h6"/></svg>
<div class="b" style="left:2364.0px;top:436.5px;width:552.0px;height:63.1px;background:#1e2328;border-radius:15px;box-shadow:inset 0 0 0 2px #303844;box-sizing:border-box;"></div>
<div class="t " style="left:2390.0px;top:458.3px;font-size:22px;color:#ffffff;font-weight:700;letter-spacing:0.47px;">On Tap</div>
<svg class="i f" style="left:2478.1px;top:457.8px;color:#66717d;" width="21.2" height="21.2" viewBox="2 2 20 20" preserveAspectRatio="none" fill="none" stroke="currentColor" stroke-width="2" stroke-linecap="round" stroke-linejoin="round"><circle cx="12" cy="12" r="10"/><path d="M12 11v6"/><circle cx="12" cy="7.3" r="0.6" fill="currentColor"/></svg>
<svg class="i f" style="left:2858.7px;top:463.2px;color:#95a1ac;" width="26.9" height="12.4" viewBox="3 8 18 9" preserveAspectRatio="none" fill="none" stroke="currentColor" stroke-width="3" stroke-linecap="round" stroke-linejoin="round"><path d="M3 8 L12 17 L21 8"/></svg>
<div class="t " style="left:2365.0px;top:536.9px;font-size:26px;color:#b4bcc5;letter-spacing:0.12px;">Action 1</div>
<svg class="i f" style="left:2830.0px;top:536.9px;color:#95a1ac;" width="25.4" height="24.0" viewBox="3.5 3.84243 19 17.6576" preserveAspectRatio="none" fill="none" stroke="currentColor" stroke-width="2.4" stroke-linecap="round" stroke-linejoin="round"><path d="M3.500 21.500V16.200L15 4.700a3 3 0 0 1 4.200 0l1.100 1.100a3 3 0 0 1 0 4.200L8.800 21.500z"/><path d="M13.600 6.100l5.300 5.300"/><path d="M13.500 21.500h9"/></svg>
<svg class="i f" style="left:2890.7px;top:537.9px;color:#95a1ac;" width="6.6" height="24.5" viewBox="9.7 1.7 4.6 20.6" preserveAspectRatio="none" fill="none" stroke="currentColor" stroke-width="0" stroke-linecap="round" stroke-linejoin="round"><circle cx="12" cy="4" r="2.300" fill="currentColor" stroke="none"/><circle cx="12" cy="12" r="2.300" fill="currentColor" stroke="none"/><circle cx="12" cy="20" r="2.300" fill="currentColor" stroke="none"/></svg>
<div class="b" style="left:2364.0px;top:580.0px;width:552.0px;height:1081.0px;background:#1e2328;border-radius:14px 14px 0 0;"></div>
<svg class="i f" style="left:2390.3px;top:609.4px;color:#95a1ac;" width="27.3" height="27.3" viewBox="3.5 3.5 17.5 17.5" preserveAspectRatio="none" fill="none" stroke="currentColor" stroke-width="2.7" stroke-linecap="round" stroke-linejoin="round"><circle cx="10.5" cy="10.5" r="7"/><path d="M15.8 15.8 L21 21"/></svg>
<div class="t " style="left:2444.0px;top:608.5px;font-size:26.5px;color:#95a1ac;letter-spacing:0.11px;">Search for action...</div>
<div class="b" style="left:2364.0px;top:665.5px;width:552.0px;height:48.0px;background:#272c36;"></div>
<div class="t " style="left:2384.8px;top:680.1px;font-size:23px;color:#95a1ac;font-weight:700;">Navigation</div>
<svg class="i f" style="left:2866.2px;top:683.5px;color:#95a1ac;" width="29.3" height="15.0" viewBox="3 8 18 9" preserveAspectRatio="none" fill="none" stroke="currentColor" stroke-width="3" stroke-linecap="round" stroke-linejoin="round"><path d="M3 8 L12 17 L21 8"/></svg>
<div class="t " style="left:2384.8px;top:736.3px;font-size:22.5px;color:#ffffff;font-weight:700;letter-spacing:0.18px;">Navigate To</div>
<svg class="i f" style="left:2866.2px;top:740.0px;color:#95a1ac;" width="29.3" height="14.5" viewBox="3 8 18 9" preserveAspectRatio="none" fill="none" stroke="currentColor" stroke-width="3" stroke-linecap="round" stroke-linejoin="round"><path d="M3 8 L12 17 L21 8"/></svg>
<div class="t " style="left:2404.7px;top:799.7px;font-size:22.8px;color:#95a1ac;font-weight:700;letter-spacing:-0.34px;">BlockedUsers</div>
<div class="b" style="left:2364.0px;top:842.3px;width:552.0px;height:1.6px;background:#2a2f35;"></div>
<div class="t " style="left:2404.7px;top:865.7px;font-size:22.8px;color:#95a1ac;font-weight:700;letter-spacing:0.26px;">CreatePost</div>
<div class="b" style="left:2364.0px;top:908.3px;width:552.0px;height:1.6px;background:#2a2f35;"></div>
<div class="t " style="left:2404.7px;top:931.8px;font-size:22.8px;color:#95a1ac;font-weight:700;letter-spacing:0.33px;">DeleteAccount</div>
<div class="b" style="left:2364.0px;top:974.4px;width:552.0px;height:1.6px;background:#2a2f35;"></div>
<div class="t " style="left:2404.7px;top:997.8px;font-size:22.8px;color:#95a1ac;font-weight:700;">EditPersonalInfo</div>
<div class="b" style="left:2364.0px;top:1040.4px;width:552.0px;height:1.6px;background:#2a2f35;"></div>
<div class="t " style="left:2404.7px;top:1063.8px;font-size:22.8px;color:#95a1ac;font-weight:700;">EditProfilePage</div>
<div class="b" style="left:2364.0px;top:1106.4px;width:552.0px;height:1.6px;background:#2a2f35;"></div>
<div class="t " style="left:2404.7px;top:1129.8px;font-size:22.8px;color:#95a1ac;font-weight:700;">FollowList</div>
<div class="b" style="left:2364.0px;top:1172.5px;width:552.0px;height:1.6px;background:#2a2f35;"></div>
<div class="t " style="left:2404.7px;top:1195.9px;font-size:22.8px;color:#95a1ac;font-weight:700;">HiddenPost</div>
<div class="b" style="left:2364.0px;top:1238.5px;width:552.0px;height:1.6px;background:#2a2f35;"></div>
<div class="t " style="left:2404.7px;top:1261.9px;font-size:22.8px;color:#95a1ac;font-weight:700;">InquiryPage</div>
<div class="b" style="left:2364.0px;top:1304.5px;width:552.0px;height:1.6px;background:#2a2f35;"></div>
<div class="t " style="left:2404.7px;top:1327.9px;font-size:22.8px;color:#95a1ac;font-weight:700;">LogOut</div>
<div class="b" style="left:2364.0px;top:1370.5px;width:552.0px;height:1.6px;background:#2a2f35;"></div>
<div class="t " style="left:2404.7px;top:1394.0px;font-size:22.8px;color:#95a1ac;font-weight:700;">MyPage</div>
<div class="b" style="left:2364.0px;top:1436.6px;width:552.0px;height:1.6px;background:#2a2f35;"></div>
<div class="t " style="left:2404.7px;top:1460.0px;font-size:22.8px;color:#95a1ac;font-weight:700;">MyPageCopy</div>
<div class="b" style="left:2364.0px;top:1502.6px;width:552.0px;height:1.6px;background:#2a2f35;"></div>
<div class="t " style="left:2404.7px;top:1526.0px;font-size:22.8px;color:#95a1ac;font-weight:700;">MyPageCopyCopy</div>
<div class="b" style="left:2364.0px;top:1568.6px;width:552.0px;height:1.6px;background:#2a2f35;"></div>
<div class="t " style="left:2404.7px;top:1592.1px;font-size:22.8px;color:#95a1ac;font-weight:700;">PostHistory</div>
<div class="b" style="left:2364.0px;top:1634.7px;width:552.0px;height:1.6px;background:#2a2f35;"></div>
<div class="t " style="left:2404.7px;top:1658.1px;font-size:22.8px;color:#95a1ac;font-weight:700;">PrivacyPolicy</div>
<div class="b" style="left:2364.0px;top:1700.7px;width:552.0px;height:1.6px;background:#2a2f35;"></div>
<div class="b" style="left:2804.0px;top:1525.3px;width:95.5px;height:95.5px;background:#4b39ef;border-radius:48px;box-shadow:0 4px 30px 10px rgba(20,24,27,.55);"></div>
<svg class="i f" style="left:2830.5px;top:1548.6px;color:#ffffff;" width="42.4" height="48.1" viewBox="3 2 18 20" preserveAspectRatio="none" fill="none" stroke="currentColor" stroke-width="0" stroke-linecap="round" stroke-linejoin="round"><path d="M3 5.500a3.500 3.500 0 0 1 3.500-3.500h11a3.500 3.500 0 0 1 3.500 3.500V22l-5-3H6.500a3.500 3.500 0 0 1-3.500-3.500z" fill="#fff" stroke="none"/><path d="M7 14.500c3 2 7 2 10 0" stroke="#4b39ef" stroke-width="3.57"/></svg>
</body></html>
